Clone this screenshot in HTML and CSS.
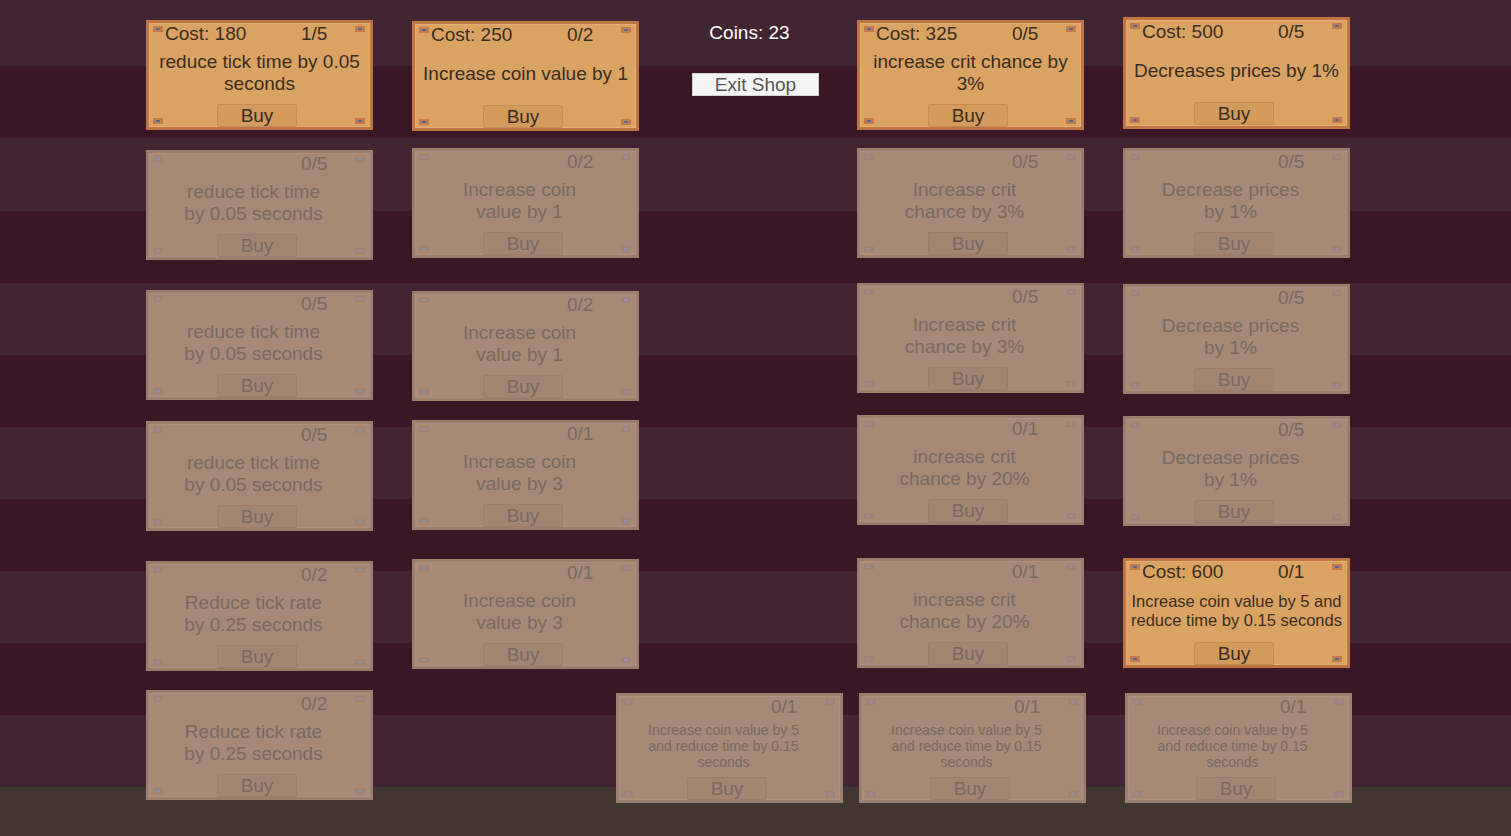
FILE: index.html
```html
<!DOCTYPE html>
<html lang="en">
<head>
<meta charset="utf-8">
<title>Shop</title>
<link rel="stylesheet" href="styles.css">
</head>
<body>
<div class="screen">
  <div class="col c1">
    <div class="card on"><div class="head"><span class="cost">Cost: 180</span><span class="count">1/5</span></div><div class="desc">reduce tick time by 0.05 seconds</div><div class="buy">Buy</div></div>
    <div class="card off"><div class="head"><span class="count">0/5</span></div><div class="desc">reduce tick time by 0.05 seconds</div><div class="buy">Buy</div></div>
    <div class="card off"><div class="head"><span class="count">0/5</span></div><div class="desc">reduce tick time by 0.05 seconds</div><div class="buy">Buy</div></div>
    <div class="card off"><div class="head"><span class="count">0/5</span></div><div class="desc">reduce tick time by 0.05 seconds</div><div class="buy">Buy</div></div>
    <div class="card off"><div class="head"><span class="count">0/2</span></div><div class="desc">Reduce tick rate by 0.25 seconds</div><div class="buy">Buy</div></div>
    <div class="card off"><div class="head"><span class="count">0/2</span></div><div class="desc">Reduce tick rate by 0.25 seconds</div><div class="buy">Buy</div></div>
  </div>
  <div class="col c2">
    <div class="card on"><div class="head"><span class="cost">Cost: 250</span><span class="count">0/2</span></div><div class="desc">Increase coin value by 1</div><div class="buy">Buy</div></div>
    <div class="card off"><div class="head"><span class="count">0/2</span></div><div class="desc">Increase coin value by 1</div><div class="buy">Buy</div></div>
    <div class="card off"><div class="head"><span class="count">0/2</span></div><div class="desc">Increase coin value by 1</div><div class="buy">Buy</div></div>
    <div class="card off"><div class="head"><span class="count">0/1</span></div><div class="desc">Increase coin value by 3</div><div class="buy">Buy</div></div>
    <div class="card off"><div class="head"><span class="count">0/1</span></div><div class="desc">Increase coin value by 3</div><div class="buy">Buy</div></div>
  </div>
  <div class="col mid">
    <div class="coins">Coins: 23</div>
    <div class="exit">Exit Shop</div>
    <div class="card off sm"><div class="head"><span class="count">0/1</span></div><div class="desc">Increase coin value by 5 and reduce time by 0.15 seconds</div><div class="buy">Buy</div></div>
  </div>
  <div class="col c4">
    <div class="card on"><div class="head"><span class="cost">Cost: 325</span><span class="count">0/5</span></div><div class="desc">increase crit chance by 3%</div><div class="buy">Buy</div></div>
    <div class="card off"><div class="head"><span class="count">0/5</span></div><div class="desc">Increase crit chance by 3%</div><div class="buy">Buy</div></div>
    <div class="card off"><div class="head"><span class="count">0/5</span></div><div class="desc">Increase crit chance by 3%</div><div class="buy">Buy</div></div>
    <div class="card off"><div class="head"><span class="count">0/1</span></div><div class="desc">increase crit chance by 20%</div><div class="buy">Buy</div></div>
    <div class="card off"><div class="head"><span class="count">0/1</span></div><div class="desc">increase crit chance by 20%</div><div class="buy">Buy</div></div>
    <div class="card off sm"><div class="head"><span class="count">0/1</span></div><div class="desc">Increase coin value by 5 and reduce time by 0.15 seconds</div><div class="buy">Buy</div></div>
  </div>
  <div class="col c5">
    <div class="card on"><div class="head"><span class="cost">Cost: 500</span><span class="count">0/5</span></div><div class="desc">Decreases prices by 1%</div><div class="buy">Buy</div></div>
    <div class="card off"><div class="head"><span class="count">0/5</span></div><div class="desc">Decrease prices by 1%</div><div class="buy">Buy</div></div>
    <div class="card off"><div class="head"><span class="count">0/5</span></div><div class="desc">Decrease prices by 1%</div><div class="buy">Buy</div></div>
    <div class="card off"><div class="head"><span class="count">0/5</span></div><div class="desc">Decrease prices by 1%</div><div class="buy">Buy</div></div>
    <div class="card on md"><div class="head"><span class="cost">Cost: 600</span><span class="count">0/1</span></div><div class="desc">Increase coin value by 5 and reduce time by 0.15 seconds</div><div class="buy">Buy</div></div>
    <div class="card off sm"><div class="head"><span class="count">0/1</span></div><div class="desc">Increase coin value by 5 and reduce time by 0.15 seconds</div><div class="buy">Buy</div></div>
  </div>
</div>
</body>
</html>
```
FILE: styles.css
```css
html, body {
  margin: 0;
  padding: 0;
  width: 1511px;
  height: 836px;
  overflow: hidden;
}

body {
  font-family: "Liberation Sans", Arial, sans-serif;
  background: linear-gradient(to bottom,
    #422532 0, #422532 66px,
    #3a1725 66px, #3a1725 138px,
    #422532 138px, #422532 211px,
    #3a1725 211px, #3a1725 283px,
    #422532 283px, #422532 355px,
    #3a1725 355px, #3a1725 427px,
    #422532 427px, #422532 499px,
    #3a1725 499px, #3a1725 571px,
    #422532 571px, #422532 643px,
    #3a1725 643px, #3a1725 715px,
    #422532 715px, #422532 787px,
    #413630 787px, #413630 836px);
}

.screen {
  display: flex;
  align-items: flex-start;
  height: 836px;
  padding-left: 146px;
  box-sizing: border-box;
}

.col {
  display: flex;
  flex-direction: column;
  width: 227px;
  flex: none;
}

.c2, .c5 { margin-left: 39px; }
.mid { width: 218px; }

/* ---------- card ---------- */
.card {
  --fill: #dba363;
  --edge: #bf7445;
  --hi: #e6ae6e;
  --pin: #c47a4b;
  --dot: #4f6aa6;
  --ink: #3a2d1e;
  --btn: #d29a5c;
  --btn-edge: #c68c52;
  width: 227px;
  height: 110px;
  box-sizing: border-box;
  padding-top: 3px;
  color: var(--ink);
  font-size: 19px;
  box-shadow: inset 0 0 0 3px var(--edge), inset 0 0 0 4px var(--hi);
  background-color: var(--fill);
  background-image:
    linear-gradient(var(--dot), var(--dot)),
    linear-gradient(var(--pin), var(--pin)),
    linear-gradient(var(--dot), var(--dot)),
    linear-gradient(var(--pin), var(--pin)),
    linear-gradient(var(--dot), var(--dot)),
    linear-gradient(var(--pin), var(--pin)),
    linear-gradient(var(--dot), var(--dot)),
    linear-gradient(var(--pin), var(--pin));
  background-size: 4px 2px, 10px 6px, 4px 2px, 10px 6px, 4px 2px, 10px 6px, 4px 2px, 10px 6px;
  background-position:
    left 10px top 8px,
    left 7px top 6px,
    right 11px top 8px,
    right 8px top 6px,
    left 10px bottom 8px,
    left 7px bottom 6px,
    right 11px bottom 8px,
    right 8px bottom 6px;
  background-repeat: no-repeat;
}

.card.off {
  --fill: #a58a78;
  --edge: #9b7f6d;
  --hi: #ab917f;
  --pin: #a08372;
  --dot: #8a90a6;
  --ink: #786a62;
  --btn: #a28674;
  --btn-edge: #9a7f6d;
}

.head {
  display: grid;
  grid-template-columns: 136px auto;
  height: 22px;
  line-height: 22px;
  padding-left: 19px;
  white-space: nowrap;
}

.count { grid-column: 2; }

.desc {
  height: 56px;
  width: 218px;
  margin-left: 4.5px;
  display: flex;
  align-items: center;
  justify-content: center;
  text-align: center;
  line-height: 22px;
}

.off .desc {
  width: 150px;
  margin-left: 32.5px;
}

.sm .desc {
  font-size: 14px;
  line-height: 16px;
}

.off.sm .desc {
  width: 160px;
  margin-left: 27.5px;
}

.md .desc {
  font-size: 16.5px;
  line-height: 19px;
}

.buy {
  width: 80px;
  height: 23px;
  margin: 3px 0 0 71px;
  box-sizing: border-box;
  border: 1px solid var(--btn-edge);
  border-radius: 2px;
  background: var(--btn);
  text-align: center;
  line-height: 21px;
  font-size: 19px;
}

/* ---------- column offsets ---------- */
.c1 { padding-top: 20px; }
.c1 .card:nth-child(2) { margin-top: 20px; }
.c1 .card:nth-child(3) { margin-top: 30px; }
.c1 .card:nth-child(4) { margin-top: 21px; }
.c1 .card:nth-child(5) { margin-top: 30px; }
.c1 .card:nth-child(6) { margin-top: 19px; }

.c2 { padding-top: 21px; }
.c2 .card:nth-child(2) { margin-top: 17px; }
.c2 .card:nth-child(3) { margin-top: 33px; }
.c2 .card:nth-child(4) { margin-top: 19px; }
.c2 .card:nth-child(5) { margin-top: 29px; }

.c4 { padding-top: 20px; }
.c4 .card:nth-child(2) { margin-top: 18px; }
.c4 .card:nth-child(3) { margin-top: 25px; }
.c4 .card:nth-child(4) { margin-top: 22px; }
.c4 .card:nth-child(5) { margin-top: 33px; }
.c4 .card:nth-child(6) { margin-top: 25px; margin-left: 2px; }

.c5 { padding-top: 17px; }
.c5 .card:nth-child(1) { height: 112px; padding-top: 4px; }
.c5 .card:nth-child(2) { margin-top: 19px; }
.c5 .card:nth-child(3) { margin-top: 26px; }
.c5 .card:nth-child(4) { margin-top: 22px; }
.c5 .card:nth-child(5) { margin-top: 32px; }
.c5 .card:nth-child(6) { margin-top: 25px; margin-left: 2px; }

/* ---------- middle ---------- */
.mid { padding-top: 22px; }

.coins {
  color: #ffffff;
  font-size: 19px;
  line-height: 22px;
  text-align: center;
  padding-left: 3px;
}

.exit {
  width: 127px;
  height: 23px;
  margin: 29px 0 0 53px;
  box-sizing: border-box;
  background: #f5f5f5;
  border: 1px solid #d2d2d2;
  color: #555555;
  font-size: 19px;
  line-height: 21px;
  text-align: center;
}

.mid .card {
  margin-top: 597px;
  margin-left: -23px;
}
```
